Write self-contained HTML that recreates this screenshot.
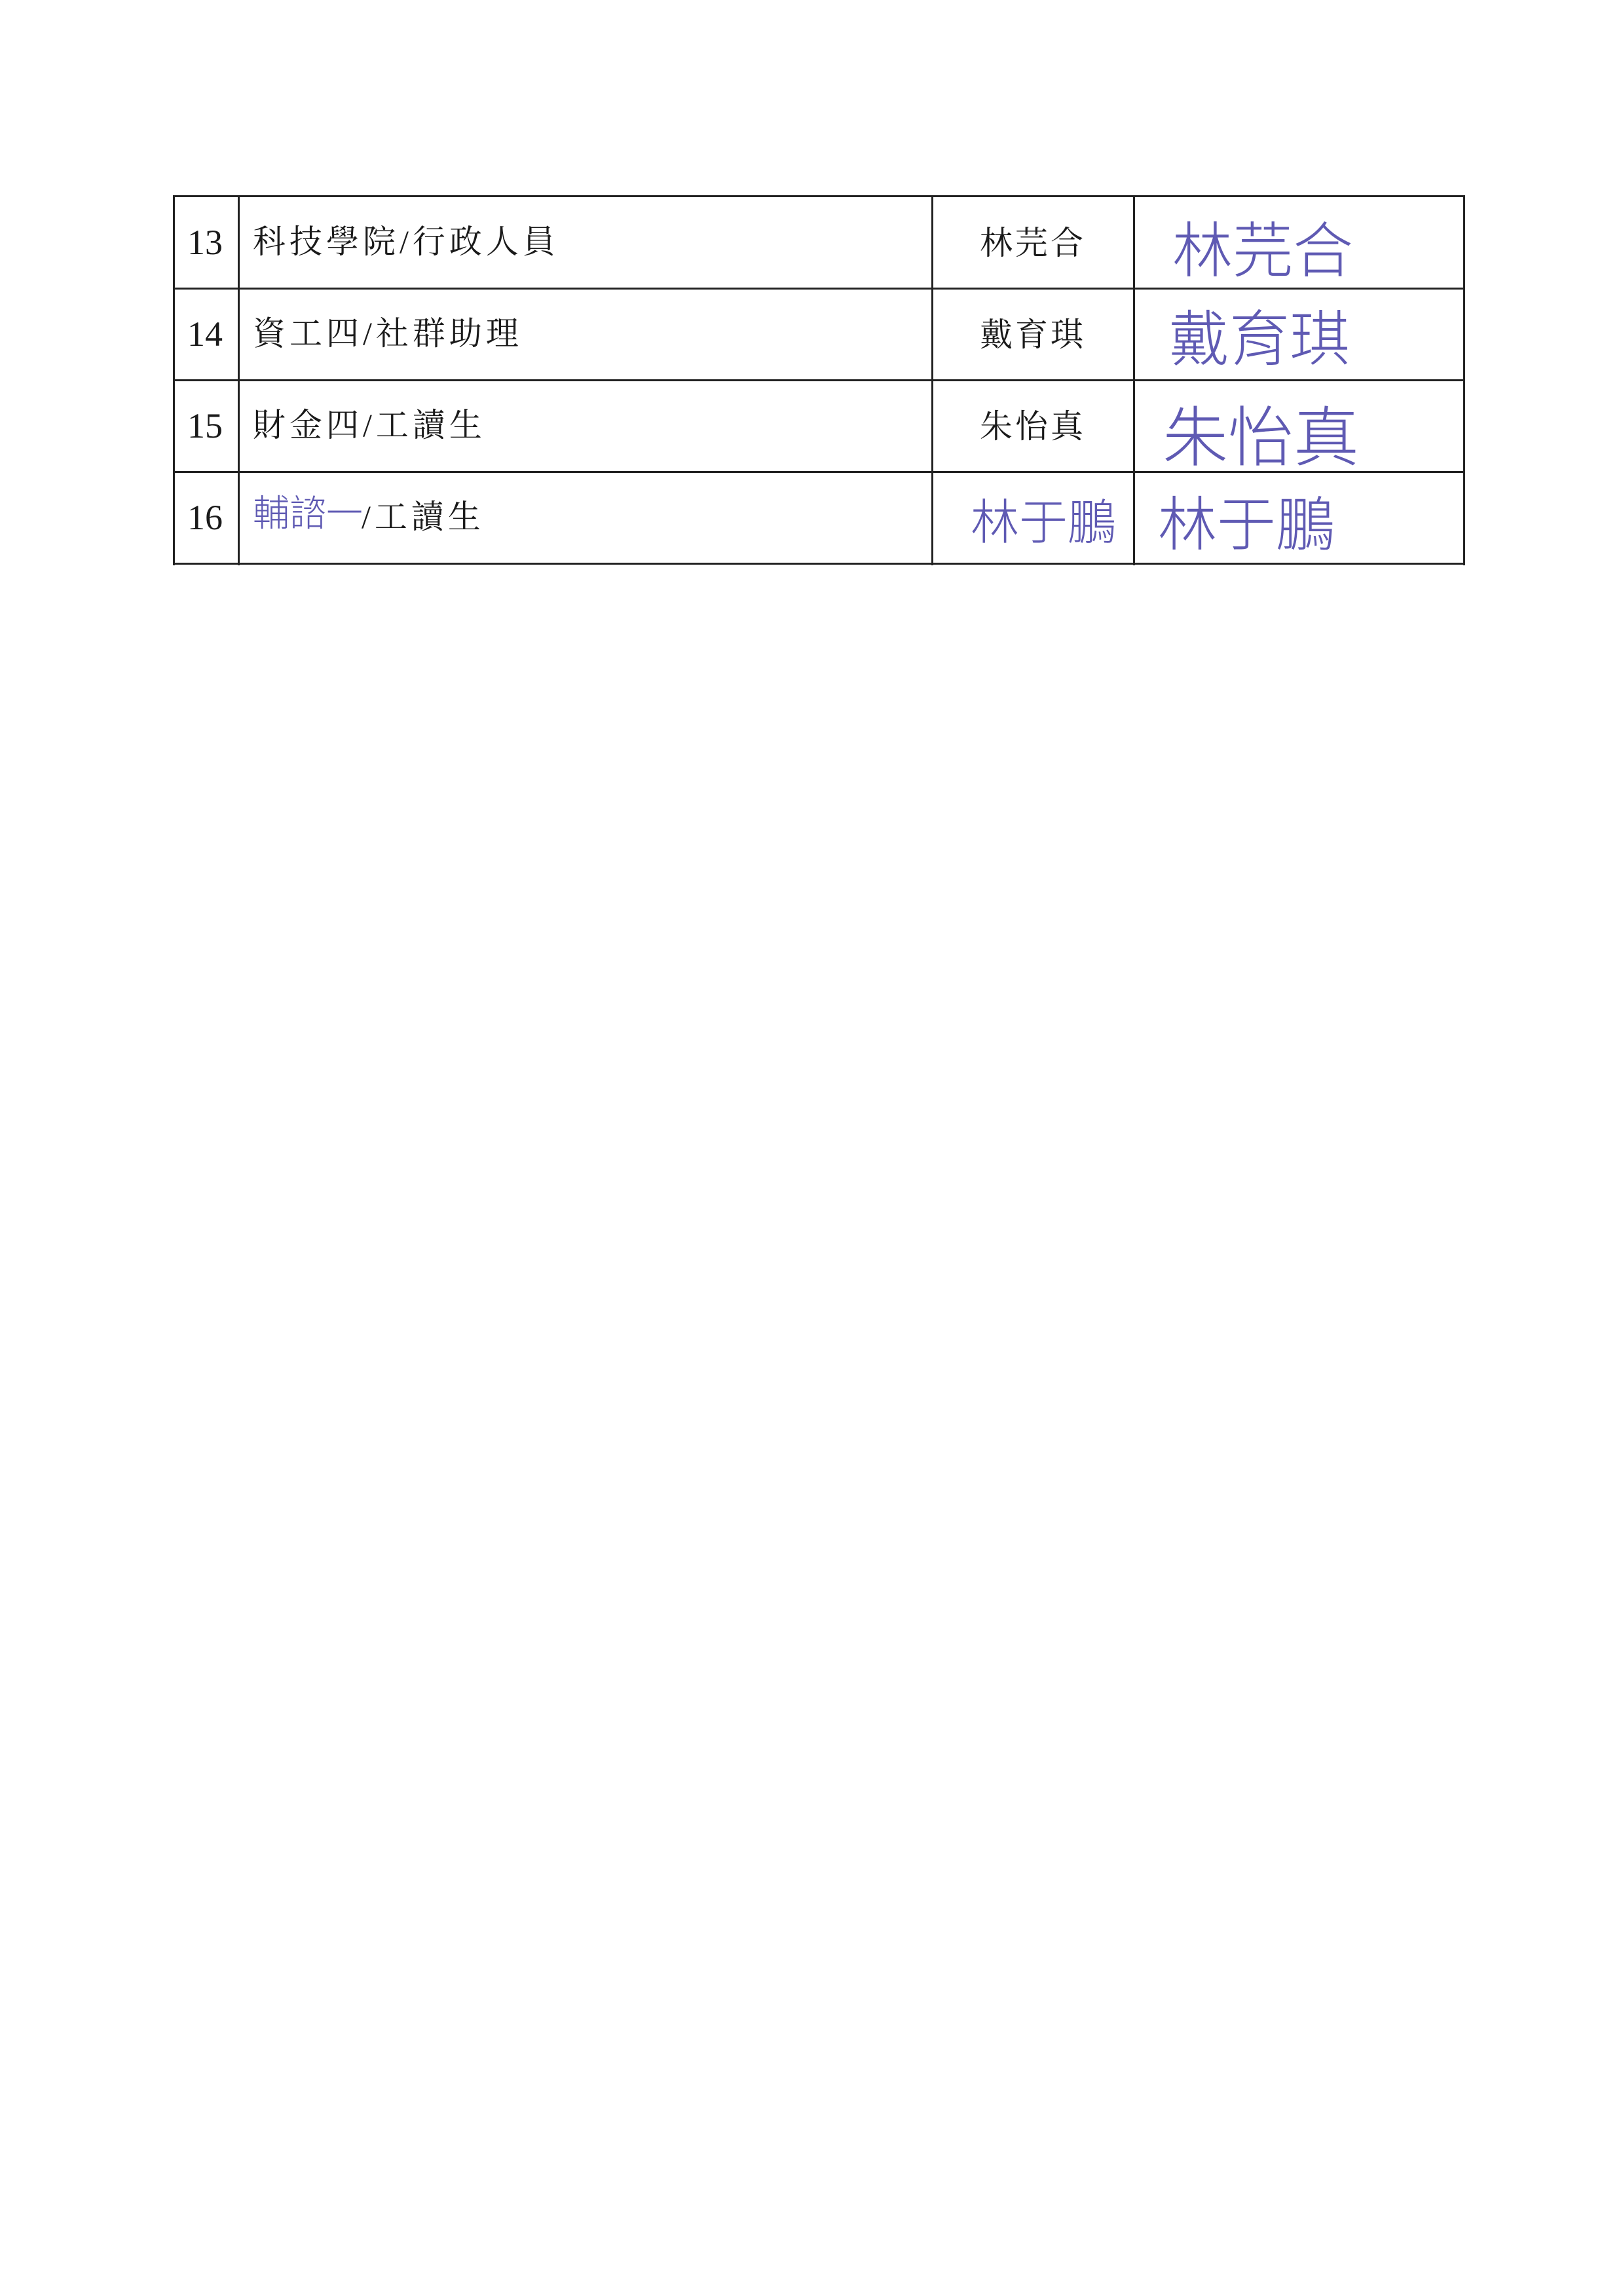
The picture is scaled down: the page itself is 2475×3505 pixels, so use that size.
<!DOCTYPE html>
<html><head><meta charset="utf-8">
<style>
html,body{margin:0;padding:0;background:#fff;}
body{width:2475px;height:3505px;position:relative;overflow:hidden;}
.h{position:absolute;background:#222;height:3px;left:264px;width:1973px;}
.v{position:absolute;background:#222;width:3px;top:298px;height:565px;}
.t{position:absolute;font-family:"Liberation Serif","Noto Serif CJK SC","Noto Sans CJK TC",serif;font-size:50px;color:#1a1a1a;line-height:1;white-space:nowrap;letter-spacing:6px;}
.n{position:absolute;font-family:"Liberation Serif",serif;font-size:54px;color:#1a1a1a;line-height:1;}
.s{position:absolute;font-family:"Noto Sans CJK TC","WenQuanYi Zen Hei",sans-serif;color:#5f5ab3;line-height:1;white-space:nowrap;font-weight:300;}
</style></head><body>
<div class="h" style="top:298px"></div>
<div class="h" style="top:439px"></div>
<div class="h" style="top:579px"></div>
<div class="h" style="top:719px"></div>
<div class="h" style="top:859px"></div>
<div class="v" style="left:264px"></div>
<div class="v" style="left:363px"></div>
<div class="v" style="left:1422px"></div>
<div class="v" style="left:1730px"></div>
<div class="v" style="left:2234px"></div>

<div class="n" style="left:286px;top:343px">13</div>
<div class="n" style="left:286px;top:483px">14</div>
<div class="n" style="left:286px;top:623px">15</div>
<div class="n" style="left:286px;top:763px">16</div>

<div class="t" style="left:386px;top:344px">科技學院/行政人員</div>
<div class="t" style="left:386px;top:484px">資工四/社群助理</div>
<div class="t" style="left:386px;top:624px">財金四/工讀生</div>
<div class="s" style="left:386px;top:752px;font-size:56px">輔諮一</div>
<div class="t" style="left:552px;top:764px">/工讀生</div>

<div class="t" style="left:1496px;top:346px;letter-spacing:4px">林芫合</div>
<div class="t" style="left:1496px;top:486px;letter-spacing:4px">戴育琪</div>
<div class="t" style="left:1496px;top:626px;letter-spacing:4px">朱怡真</div>
<div class="s" style="left:1482px;top:755px;font-size:74px">林于鵬</div>

<div class="s" style="left:1790px;top:330px;font-size:92px">林芫合</div>
<div class="s" style="left:1785px;top:465px;font-size:92px">戴育琪</div>
<div class="s" style="left:1775px;top:610px;font-size:100px">朱怡真</div>
<div class="s" style="left:1768px;top:748px;font-size:90px">林于鵬</div>
</body></html>
